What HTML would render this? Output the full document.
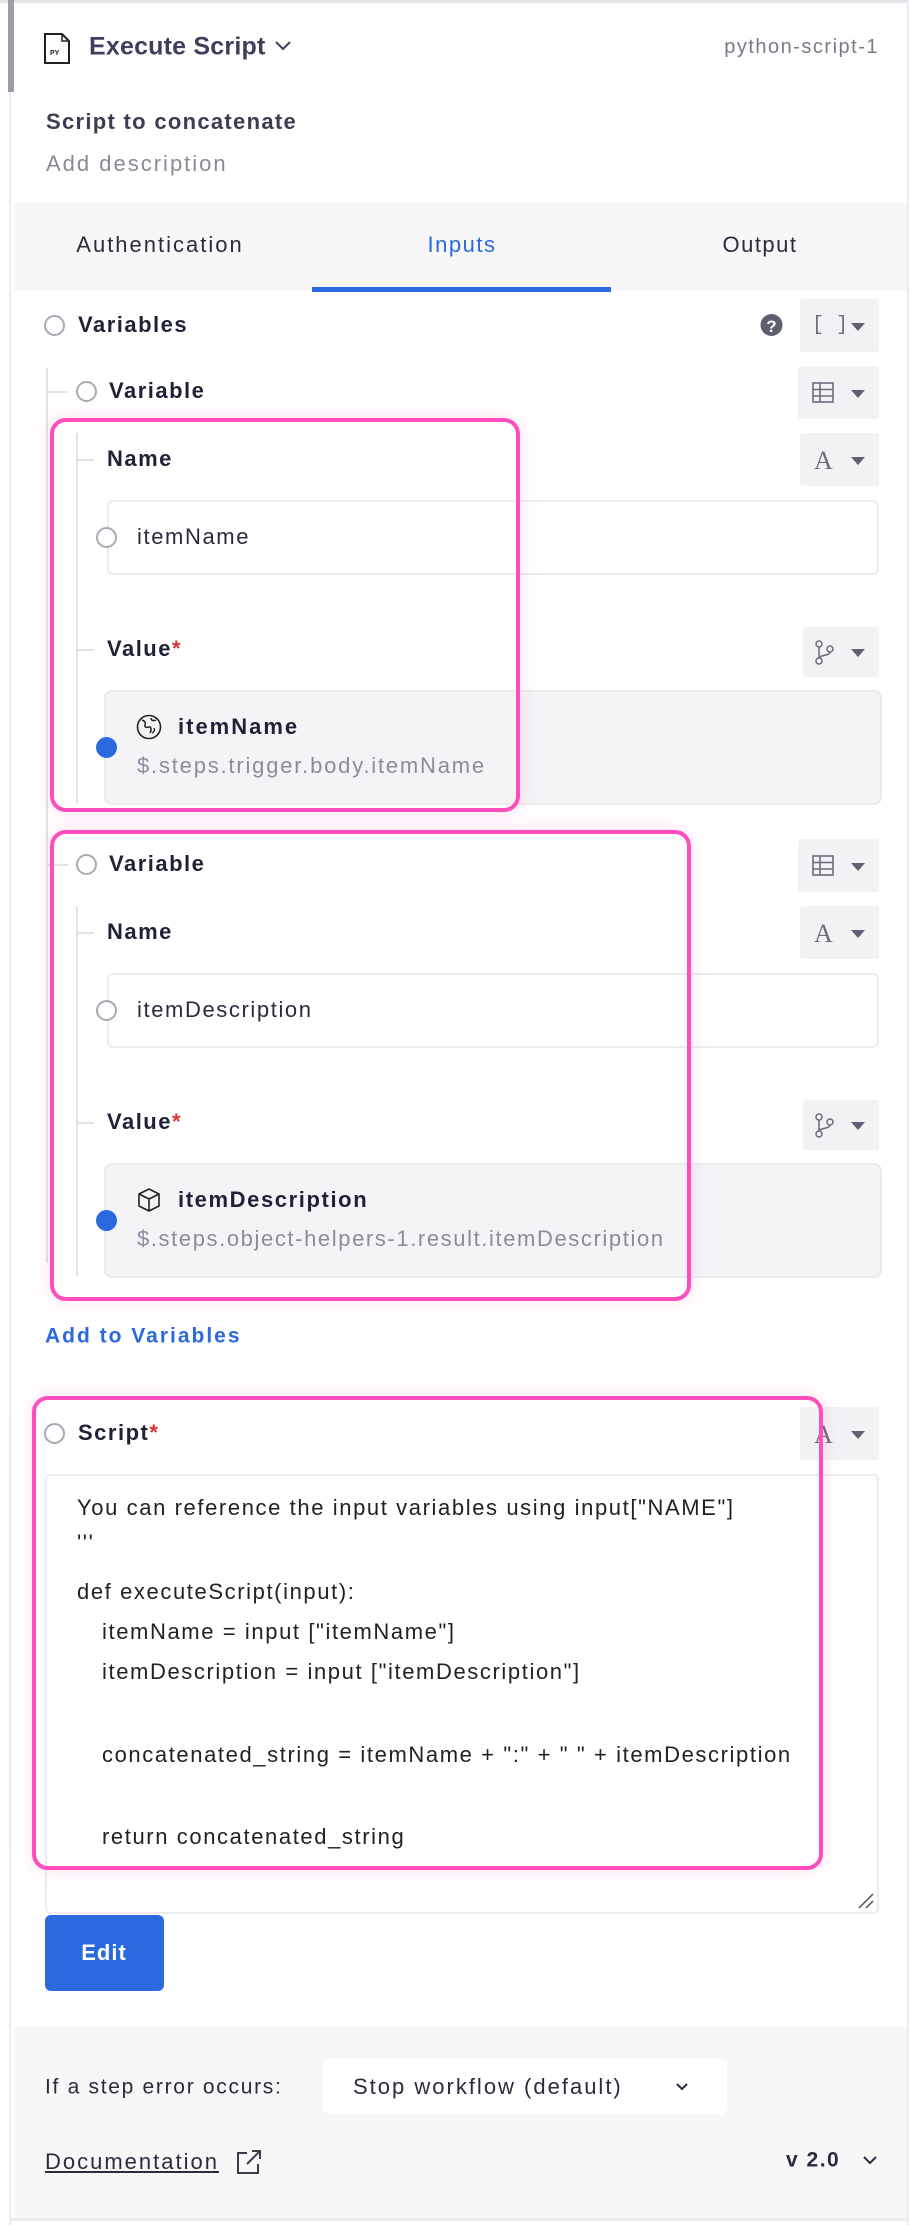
<!DOCTYPE html>
<html><head><meta charset="utf-8"><style>
*{margin:0;padding:0;box-sizing:border-box}
body{width:909px;height:2225px;position:relative;background:#fff;font-family:"Liberation Sans",sans-serif;color:#1f2137;overflow:hidden}
.a{position:absolute;white-space:nowrap}
.t{line-height:1;transform:translateY(-50%)}
.radio{position:absolute;width:21px;height:21px;border:2px solid #a9a9b4;border-radius:50%;background:#fff}
.dot{position:absolute;width:21px;height:21px;border-radius:50%;background:#2b6ade}
.btn{position:absolute;background:#f2f2f5;border-radius:3px}
.caret{position:absolute;right:14px;top:50%;margin-top:-3px;width:0;height:0;border-left:7px solid transparent;border-right:7px solid transparent;border-top:8px solid #5f6072}
.pink{position:absolute;border:4px solid #ff4dbd;border-radius:16px;box-shadow:0 0 18px rgba(255,77,189,.18)}
.lbl{font-size:22px;font-weight:bold;color:#1f2137;letter-spacing:1.5px}
.box{position:absolute;border:2px solid #ececef;border-radius:6px;background:#fff}
.vbox{position:absolute;border:2px solid #ebebee;border-radius:8px;background:#f4f4f7}
.code{position:absolute;left:77px;font-size:22px;color:#222;white-space:nowrap;line-height:1;transform:translateY(-50%);letter-spacing:1.6px}
.vl{position:absolute;width:2px;background:#e2e2e7}
.hl{position:absolute;height:2px;background:#e2e2e7}
</style></head><body>
<div class="a" style="left:0;top:0;width:909px;height:3px;background:#e4e4ea"></div>
<div class="a" style="left:9px;top:0;width:2px;height:2225px;background:#ececf0"></div>
<div class="a" style="left:8px;top:0;width:6px;height:92px;background:#9c9cab"></div>
<div class="a" style="left:907px;top:0;width:2px;height:2225px;background:#ececf0"></div>

<svg class="a" style="left:44px;top:33px" width="27" height="31" viewBox="0 0 27 31"><path d="M1 1h17l7 7v22H1z" fill="#fff" stroke="#222" stroke-width="2"/><path d="M18 1v7h7" fill="none" stroke="#222" stroke-width="1.5"/><text x="6" y="22" font-size="7" font-family="Liberation Sans" font-weight="bold" fill="#222">PY</text></svg>
<div class="a t" style="left:89px;top:47px;font-size:25px;font-weight:600;color:#3d3f5c;letter-spacing:0.2px">Execute Script</div>
<svg class="a" style="left:274px;top:40px" width="18" height="12" viewBox="0 0 18 12"><path d="M2 2l7 7 7-7" fill="none" stroke="#3d3f5c" stroke-width="2"/></svg>
<div class="a t" style="right:30px;top:47px;font-size:20px;color:#7a7a86;letter-spacing:1.5px">python-script-1</div>
<div class="a t" style="left:46px;top:122px;font-size:22px;font-weight:bold;color:#3b3d50;letter-spacing:1.3px">Script to concatenate</div>
<div class="a t" style="left:46px;top:164px;font-size:22px;color:#8a8a94;letter-spacing:2px">Add description</div>

<div class="a" style="left:14px;top:203px;width:893px;height:88px;background:#f7f7f8"></div>
<div class="a t" style="left:160px;top:245px;font-size:22px;color:#2a2b3d;letter-spacing:2px;transform:translate(-50%,-50%)">Authentication</div>
<div class="a t" style="left:462px;top:245px;font-size:22px;color:#2b6ade;letter-spacing:1.5px;transform:translate(-50%,-50%)">Inputs</div>
<div class="a t" style="left:760px;top:245px;font-size:22px;color:#2a2b3d;letter-spacing:1.5px;transform:translate(-50%,-50%)">Output</div>
<div class="a" style="left:312px;top:287px;width:299px;height:5px;background:#2b6ade"></div>

<div class="radio" style="left:44px;top:315px"></div>
<div class="a t lbl" style="left:78px;top:325px">Variables</div>
<svg class="a" style="left:760px;top:313px" width="23" height="24" viewBox="0 0 23 24"><circle cx="11.5" cy="12" r="11" fill="#5d5e70"/><text x="11.5" y="19" text-anchor="middle" font-size="17" font-weight="bold" font-family="Liberation Sans" fill="#fff">?</text></svg>
<div class="btn" style="left:800px;top:299px;width:79px;height:53px"><div class="a" style="left:12px;top:15px;font-size:20px;color:#6b6c7d;font-family:'Liberation Mono',monospace">[ ]</div><div class="caret"></div></div>

<div class="vl" style="left:46px;top:368px;height:895px"></div>

<div class="hl" style="left:46px;top:391px;width:22px"></div>
<div class="radio" style="left:76px;top:381px"></div>
<div class="a t lbl" style="left:109px;top:391px">Variable</div>
<div class="btn" style="left:798px;top:366px;width:81px;height:53px"><svg class="a" style="left:14px;top:16px" width="22" height="21" viewBox="0 0 22 21"><rect x="1" y="1" width="20" height="19" fill="none" stroke="#6b6c7d" stroke-width="1.6"/><path d="M1 7.5h20M1 14h20M8 1v19" stroke="#6b6c7d" stroke-width="1.6"/></svg><div class="caret"></div></div>

<div class="vl" style="left:76px;top:433px;height:370px"></div>
<div class="hl" style="left:76px;top:459px;width:18px"></div>
<div class="a t lbl" style="left:107px;top:459px">Name</div>
<div class="btn" style="left:800px;top:433px;width:79px;height:53px"><div class="a" style="left:14px;top:13px;font-size:26px;color:#6b6c7d;font-family:'Liberation Serif',serif">A</div><div class="caret"></div></div>
<div class="box" style="left:107px;top:500px;width:772px;height:75px"></div>
<div class="radio" style="left:96px;top:527px"></div>
<div class="a t" style="left:137px;top:537px;font-size:22px;color:#2a2b3d;letter-spacing:1.6px">itemName</div>
<div class="hl" style="left:76px;top:649px;width:18px"></div>
<div class="a t lbl" style="left:107px;top:649px">Value<span style="color:#d33">*</span></div>
<div class="btn" style="left:803px;top:627px;width:76px;height:50px"><svg class="a" style="left:11px;top:13px" width="22" height="26" viewBox="0 0 22 26"><circle cx="5" cy="4" r="3" fill="none" stroke="#6b6c7d" stroke-width="1.5"/><circle cx="5" cy="21" r="3" fill="none" stroke="#6b6c7d" stroke-width="1.5"/><circle cx="16" cy="9" r="3" fill="none" stroke="#6b6c7d" stroke-width="1.5"/><path d="M5 7v11M16 12c0 4-11 3-11 6" fill="none" stroke="#6b6c7d" stroke-width="1.5"/></svg><div class="caret"></div></div>
<div class="vbox" style="left:104px;top:690px;width:778px;height:115px"></div>
<div class="dot" style="left:96px;top:737px"></div>
<svg class="a" style="left:136px;top:714px" width="26" height="26" viewBox="0 0 26 26"><circle cx="13" cy="13" r="11.5" fill="none" stroke="#222" stroke-width="1.6"/><path d="M6 6c3 1 4 3 3 5s2 3 4 2 3 3 1 6M15 4c0 3 3 3 5 2M18 14c1 2 0 4-2 5" fill="none" stroke="#222" stroke-width="1.5"/></svg>
<div class="a t" style="left:178px;top:727px;font-size:22px;font-weight:bold;color:#1f2137;letter-spacing:2px">itemName</div>
<div class="a t" style="left:137px;top:766px;font-size:22px;color:#8b8c9a;letter-spacing:1.8px">$.steps.trigger.body.itemName</div>
<div class="pink" style="left:50px;top:418px;width:470px;height:394px"></div>

<div class="hl" style="left:46px;top:864px;width:22px"></div>
<div class="radio" style="left:76px;top:854px"></div>
<div class="a t lbl" style="left:109px;top:864px">Variable</div>
<div class="btn" style="left:798px;top:839px;width:81px;height:53px"><svg class="a" style="left:14px;top:16px" width="22" height="21" viewBox="0 0 22 21"><rect x="1" y="1" width="20" height="19" fill="none" stroke="#6b6c7d" stroke-width="1.6"/><path d="M1 7.5h20M1 14h20M8 1v19" stroke="#6b6c7d" stroke-width="1.6"/></svg><div class="caret"></div></div>
<div class="vl" style="left:76px;top:906px;height:370px"></div>
<div class="hl" style="left:76px;top:932px;width:18px"></div>
<div class="a t lbl" style="left:107px;top:932px">Name</div>
<div class="btn" style="left:800px;top:906px;width:79px;height:53px"><div class="a" style="left:14px;top:13px;font-size:26px;color:#6b6c7d;font-family:'Liberation Serif',serif">A</div><div class="caret"></div></div>
<div class="box" style="left:107px;top:973px;width:772px;height:75px"></div>
<div class="radio" style="left:96px;top:1000px"></div>
<div class="a t" style="left:137px;top:1010px;font-size:22px;color:#2a2b3d;letter-spacing:1.6px">itemDescription</div>
<div class="hl" style="left:76px;top:1122px;width:18px"></div>
<div class="a t lbl" style="left:107px;top:1122px">Value<span style="color:#d33">*</span></div>
<div class="btn" style="left:803px;top:1100px;width:76px;height:50px"><svg class="a" style="left:11px;top:13px" width="22" height="26" viewBox="0 0 22 26"><circle cx="5" cy="4" r="3" fill="none" stroke="#6b6c7d" stroke-width="1.5"/><circle cx="5" cy="21" r="3" fill="none" stroke="#6b6c7d" stroke-width="1.5"/><circle cx="16" cy="9" r="3" fill="none" stroke="#6b6c7d" stroke-width="1.5"/><path d="M5 7v11M16 12c0 4-11 3-11 6" fill="none" stroke="#6b6c7d" stroke-width="1.5"/></svg><div class="caret"></div></div>
<div class="vbox" style="left:104px;top:1163px;width:778px;height:115px"></div>
<div class="dot" style="left:96px;top:1210px"></div>
<svg class="a" style="left:136px;top:1187px" width="26" height="26" viewBox="0 0 26 26"><path d="M13 2l10 5v12l-10 5-10-5V7z M3 7l10 5 10-5 M13 12v12" fill="none" stroke="#222" stroke-width="1.6" stroke-linejoin="round"/></svg>
<div class="a t" style="left:178px;top:1200px;font-size:22px;font-weight:bold;color:#1f2137;letter-spacing:1.6px">itemDescription</div>
<div class="a t" style="left:137px;top:1239px;font-size:22px;color:#8b8c9a;letter-spacing:1.6px">$.steps.object-helpers-1.result.itemDescription</div>
<div class="pink" style="left:50px;top:830px;width:641px;height:471px"></div>

<div class="a t" style="left:45px;top:1336px;font-size:21px;font-weight:bold;color:#2b6ade;letter-spacing:2px">Add to Variables</div>

<div class="radio" style="left:44px;top:1423px"></div>
<div class="a t lbl" style="left:78px;top:1433px">Script<span style="color:#d33">*</span></div>
<div class="btn" style="left:800px;top:1407px;width:79px;height:53px"><div class="a" style="left:14px;top:13px;font-size:26px;color:#6b6c7d;font-family:'Liberation Serif',serif">A</div><div class="caret"></div></div>
<div class="box" style="left:45px;top:1474px;width:834px;height:440px"></div>
<div class="code" style="top:1508px">You can reference the input variables using input["NAME"]</div>
<div class="code" style="top:1543px">'''</div>
<div class="code" style="top:1592px">def executeScript(input):</div>
<div class="code" style="top:1632px;left:102px">itemName = input ["itemName"]</div>
<div class="code" style="top:1672px;left:102px">itemDescription = input ["itemDescription"]</div>
<div class="code" style="top:1755px;left:102px">concatenated_string = itemName + ":" + " " + itemDescription</div>
<div class="code" style="top:1837px;left:102px">return concatenated_string</div>
<svg class="a" style="left:855px;top:1890px" width="20" height="20" viewBox="0 0 20 20"><path d="M4 18L18 4M11 18l7-7" stroke="#555" stroke-width="1.5"/></svg>
<div class="pink" style="left:32px;top:1396px;width:791px;height:474px"></div>

<div class="a" style="left:45px;top:1915px;width:119px;height:76px;background:#2b6ade;border-radius:6px"></div>
<div class="a t" style="left:104px;top:1953px;font-size:22px;font-weight:bold;color:#fff;letter-spacing:1px;transform:translate(-50%,-50%)">Edit</div>

<div class="a" style="left:14px;top:2027px;width:893px;height:193px;background:#f7f7f8;border-bottom-left-radius:8px"></div>
<div class="a" style="left:10px;top:2218px;width:899px;height:3px;background:#ececf0"></div>
<div class="a t" style="left:45px;top:2087px;font-size:21px;color:#2a2b3d;letter-spacing:1.7px">If a step error occurs:</div>
<div class="a" style="left:323px;top:2059px;width:404px;height:55px;background:#fff;border-radius:6px"></div>
<div class="a t" style="left:353px;top:2087px;font-size:22px;color:#2a2b3d;letter-spacing:2px">Stop workflow (default)</div>
<svg class="a" style="left:675px;top:2082px" width="14" height="10" viewBox="0 0 14 10"><path d="M2 2l5 5 5-5" fill="none" stroke="#2a2b3d" stroke-width="2"/></svg>
<div class="a t" style="left:45px;top:2162px;font-size:22px;color:#2a2b3d;text-decoration:underline;letter-spacing:2px">Documentation</div>
<svg class="a" style="left:235px;top:2148px" width="28" height="28" viewBox="0 0 28 28"><path d="M12 5H3v20h20v-9" fill="none" stroke="#3a3b4d" stroke-width="2"/><path d="M12 16L25 3M17 3h8v8" fill="none" stroke="#3a3b4d" stroke-width="2"/></svg>
<div class="a t" style="left:786px;top:2160px;font-size:21px;font-weight:bold;color:#2a2b3d;letter-spacing:1.5px">v 2.0</div>
<svg class="a" style="left:862px;top:2155px" width="16" height="11" viewBox="0 0 16 11"><path d="M2 2l6 6 6-6" fill="none" stroke="#2a2b3d" stroke-width="2"/></svg>
</body></html>
